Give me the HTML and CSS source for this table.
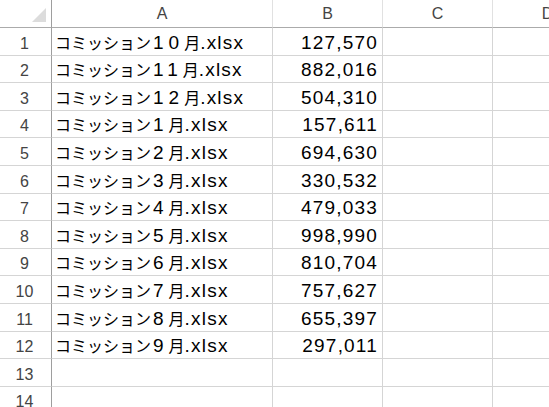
FILE: index.html
```html
<!DOCTYPE html>
<html lang="ja">
<head>
<meta charset="utf-8">
<link rel="stylesheet" href="styles.css">
</head>
<body>
<div class="sheet">
  <div class="corner"><span class="tri"></span></div>
  <div class="colhead">A</div>
  <div class="colhead">B</div>
  <div class="colhead">C</div>
  <div class="colhead">D</div>

  <div class="rowhead">1</div><div class="cell"><span class="kana">コミッション</span><span class="n">10</span><span class="kana">月</span>.xlsx</div><div class="cell num">127,570</div><div class="cell"></div><div class="cell"></div>
  <div class="rowhead">2</div><div class="cell"><span class="kana">コミッション</span><span class="n">11</span><span class="kana">月</span>.xlsx</div><div class="cell num">882,016</div><div class="cell"></div><div class="cell"></div>
  <div class="rowhead">3</div><div class="cell"><span class="kana">コミッション</span><span class="n">12</span><span class="kana">月</span>.xlsx</div><div class="cell num">504,310</div><div class="cell"></div><div class="cell"></div>
  <div class="rowhead">4</div><div class="cell"><span class="kana">コミッション</span><span class="n">1</span><span class="kana">月</span>.xlsx</div><div class="cell num">157,611</div><div class="cell"></div><div class="cell"></div>
  <div class="rowhead">5</div><div class="cell"><span class="kana">コミッション</span><span class="n">2</span><span class="kana">月</span>.xlsx</div><div class="cell num">694,630</div><div class="cell"></div><div class="cell"></div>
  <div class="rowhead">6</div><div class="cell"><span class="kana">コミッション</span><span class="n">3</span><span class="kana">月</span>.xlsx</div><div class="cell num">330,532</div><div class="cell"></div><div class="cell"></div>
  <div class="rowhead">7</div><div class="cell"><span class="kana">コミッション</span><span class="n">4</span><span class="kana">月</span>.xlsx</div><div class="cell num">479,033</div><div class="cell"></div><div class="cell"></div>
  <div class="rowhead">8</div><div class="cell"><span class="kana">コミッション</span><span class="n">5</span><span class="kana">月</span>.xlsx</div><div class="cell num">998,990</div><div class="cell"></div><div class="cell"></div>
  <div class="rowhead">9</div><div class="cell"><span class="kana">コミッション</span><span class="n">6</span><span class="kana">月</span>.xlsx</div><div class="cell num">810,704</div><div class="cell"></div><div class="cell"></div>
  <div class="rowhead">10</div><div class="cell"><span class="kana">コミッション</span><span class="n">7</span><span class="kana">月</span>.xlsx</div><div class="cell num">757,627</div><div class="cell"></div><div class="cell"></div>
  <div class="rowhead">11</div><div class="cell"><span class="kana">コミッション</span><span class="n">8</span><span class="kana">月</span>.xlsx</div><div class="cell num">655,397</div><div class="cell"></div><div class="cell"></div>
  <div class="rowhead">12</div><div class="cell"><span class="kana">コミッション</span><span class="n">9</span><span class="kana">月</span>.xlsx</div><div class="cell num">297,011</div><div class="cell"></div><div class="cell"></div>
  <div class="rowhead">13</div><div class="cell"></div><div class="cell"></div><div class="cell"></div><div class="cell"></div>
  <div class="rowhead">14</div><div class="cell"></div><div class="cell"></div><div class="cell"></div><div class="cell"></div>
</div>
</body>
</html>
```

FILE: styles.css
```css
html, body {
  margin: 0;
  padding: 0;
  background: #ffffff;
}

.sheet {
  width: 549px;
  height: 407px;
  overflow: hidden;
  display: grid;
  grid-template-columns: 52px 221px 110px 110px 110px;
  grid-template-rows: 28px repeat(14, 27.6px);
  font-family: "Liberation Sans", "Noto Sans CJK JP", sans-serif;
}

.corner {
  border-right: 1px solid #9e9e9e;
  border-bottom: 1px solid #ababab;
  position: relative;
  box-sizing: border-box;
}

.tri {
  position: absolute;
  right: 5px;
  bottom: 5px;
  width: 0;
  height: 0;
  border-left: 14px solid transparent;
  border-bottom: 14px solid #dcdcdc;
}

.colhead {
  box-sizing: border-box;
  border-right: 1px solid #e1e1e1;
  border-bottom: 1px solid #ababab;
  display: flex;
  align-items: center;
  justify-content: center;
  font-size: 16px;
  color: #444444;
  padding-top: 1px;
}

.rowhead {
  box-sizing: border-box;
  border-right: 1px solid #9e9e9e;
  border-bottom: 1px solid #d5d5d5;
  display: flex;
  align-items: flex-end;
  justify-content: center;
  font-size: 16px;
  color: #444444;
  padding-bottom: 2px;
  padding-right: 2px;
}

.cell {
  box-sizing: border-box;
  border-right: 1px solid #d5d5d5;
  border-bottom: 1px solid #d5d5d5;
  display: flex;
  align-items: baseline;
  align-content: flex-end;
  flex-wrap: wrap;
  font-size: 19px;
  color: #000000;
  padding: 0 3px 1px 3px;
  white-space: nowrap;
  overflow: hidden;
  line-height: 22px;
  letter-spacing: 1.2px;
}

.cell .kana {
  font-family: "Noto Sans CJK JP", sans-serif;
  font-size: 16px;
  letter-spacing: 0;
}

.cell .n {
  font-size: 19px;
  letter-spacing: 5px;
  padding-left: 2px;
}

.num {
  justify-content: flex-end;
  padding-right: 4px;
  letter-spacing: 1.2px;
  font-size: 19px;
}
```
